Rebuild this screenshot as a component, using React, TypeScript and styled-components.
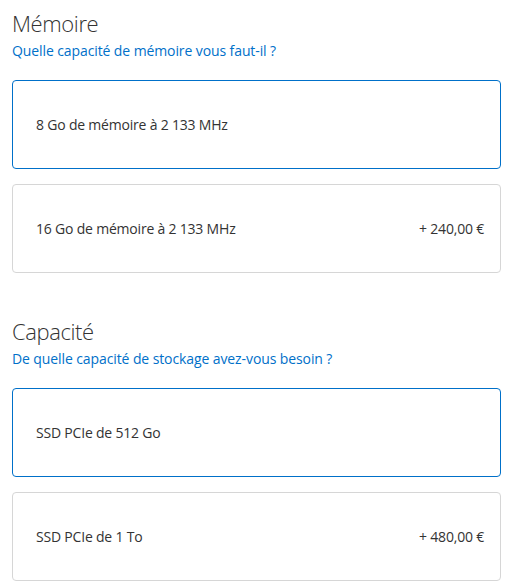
import React from "react";
import styled, { createGlobalStyle } from "styled-components";

const Global = createGlobalStyle`
  html, body { margin: 0; padding: 0; background: #fff; }
  body { font-family: "Open Sans", "Noto Sans", sans-serif; color: #333; -webkit-font-smoothing: antialiased; }
`;

const Page = styled.div`
  display: flex;
  flex-direction: column;
  gap: 44px;
  padding: 9px 4px 0 12px;
`;

const Section = styled.section`
  display: flex;
  flex-direction: column;
`;

const Title = styled.h2`
  margin: 0;
  font-size: 22px;
  font-weight: 300;
  line-height: 28px;
  color: #333;
  letter-spacing: -0.4px;
`;

const Subtitle = styled.p`
  margin: 5px 0 0;
  font-size: 14px;
  line-height: 18px;
  color: #0070c9;
  letter-spacing: -0.1px;
`;

const Options = styled.div`
  display: flex;
  flex-direction: column;
  gap: 15px;
  margin-top: 20px;
`;

const Option = styled.div<{ $selected?: boolean }>`
  box-sizing: border-box;
  height: 89px;
  display: flex;
  align-items: center;
  justify-content: space-between;
  padding: 0 16px 0 23px;
  border: 1px solid ${(p) => (p.$selected ? "#0070c9" : "#d6d6d6")};
  border-radius: 4px;
  font-size: 14px;
  color: #333;
  letter-spacing: -0.2px;
`;

const Price = styled.span`
  font-size: 14px;
`;

type Item = { label: string; price?: string; selected?: boolean };

const sections: { title: string; subtitle: string; items: Item[] }[] = [
  {
    title: "Mémoire",
    subtitle: "Quelle capacité de mémoire vous faut-il ?",
    items: [
      { label: "8 Go de mémoire à 2 133 MHz", selected: true },
      { label: "16 Go de mémoire à 2 133 MHz", price: "+ 240,00 €" },
    ],
  },
  {
    title: "Capacité",
    subtitle: "De quelle capacité de stockage avez-vous besoin ?",
    items: [
      { label: "SSD PCIe de 512 Go", selected: true },
      { label: "SSD PCIe de 1 To", price: "+ 480,00 €" },
    ],
  },
];

export default function App() {
  return (
    <>
      <Global />
      <Page>
        {sections.map((s) => (
          <Section key={s.title}>
            <Title>{s.title}</Title>
            <Subtitle>{s.subtitle}</Subtitle>
            <Options>
              {s.items.map((it) => (
                <Option key={it.label} $selected={it.selected}>
                  <span>{it.label}</span>
                  {it.price && <Price>{it.price}</Price>}
                </Option>
              ))}
            </Options>
          </Section>
        ))}
      </Page>
    </>
  );
}
